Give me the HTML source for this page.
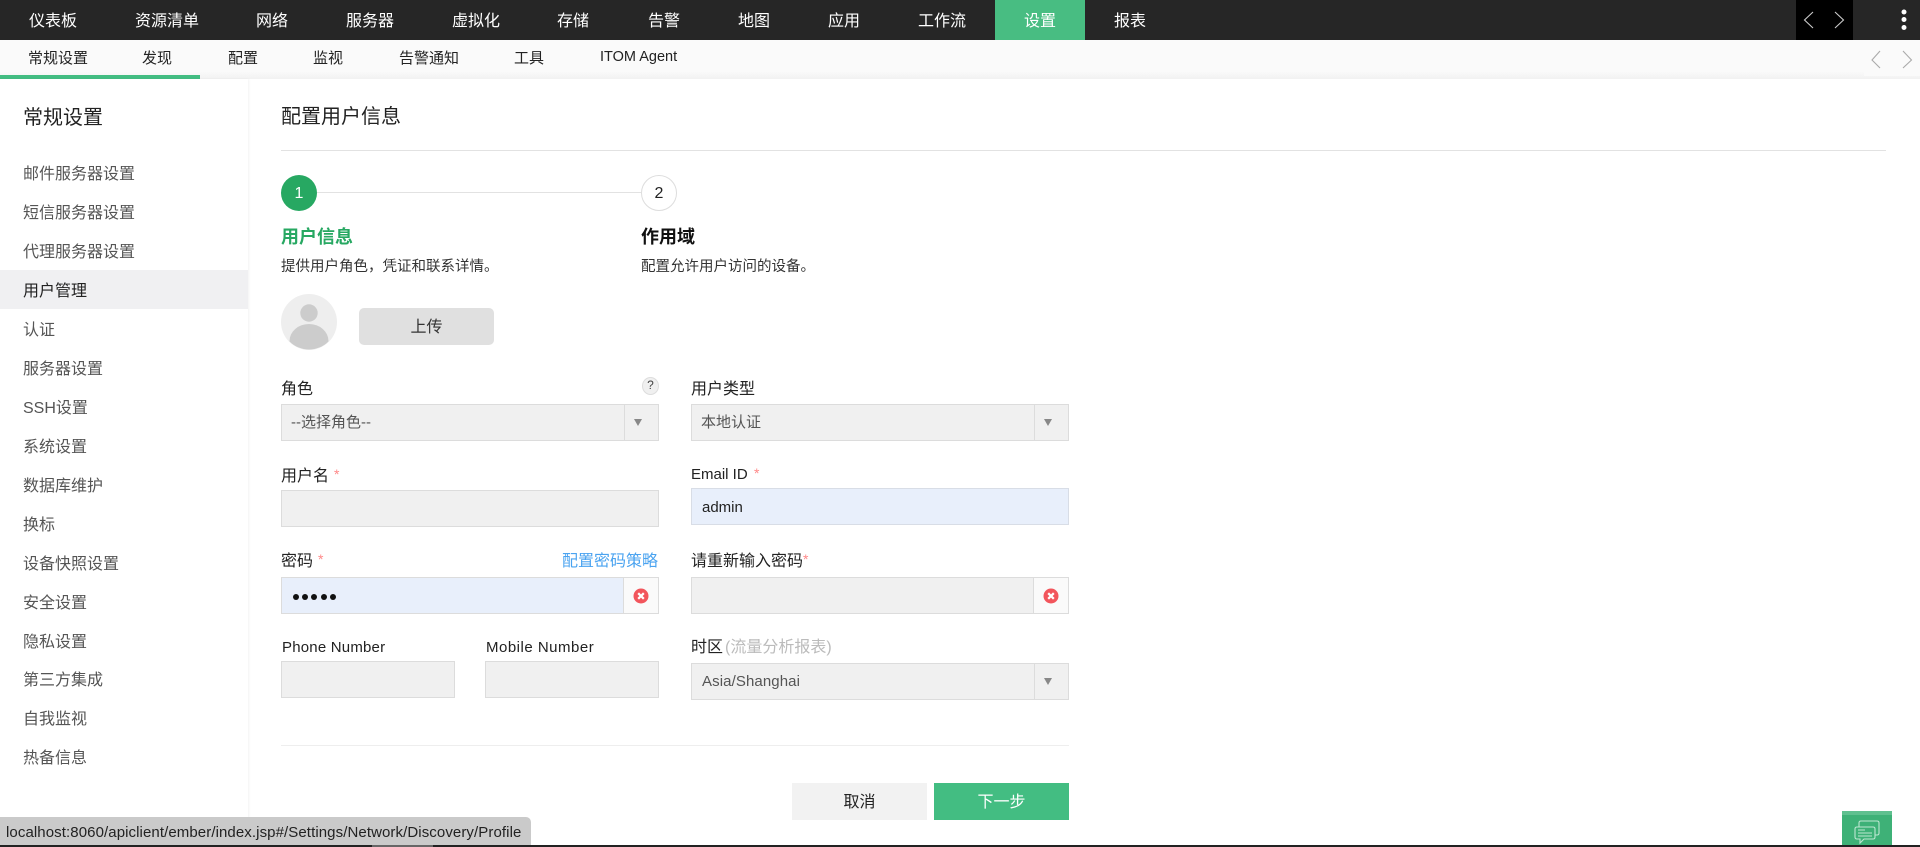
<!DOCTYPE html>
<html lang="zh-CN">
<head>
<meta charset="utf-8">
<title>配置用户信息</title>
<style>
html,body{margin:0;padding:0;width:1920px;height:847px;overflow:hidden;background:#fff}
body{position:relative;font-family:"Liberation Sans","Noto Sans CJK SC",sans-serif;color:#333}
.a{position:absolute;box-sizing:border-box}
.t{position:absolute;white-space:nowrap;line-height:20px;height:20px;font-size:16px}
.n{color:#fff;top:12px}
.s{color:#222;top:49px;font-size:15px}
.m{color:#555;left:23px;font-size:16px}
.l{color:#222}
.r{color:#f88;font-size:14px}
.f{position:absolute;box-sizing:border-box;background:#f0f0f0;border:1px solid #dcdcdc}
.sep{position:absolute;top:0;bottom:0;width:1px;background:#dcdcdc}
.arr{position:absolute;width:0;height:0;border-left:4px solid transparent;border-right:4px solid transparent;border-top:7px solid #888}
.dot{position:absolute;width:6px;height:6px;border-radius:50%;background:#111;top:594px}
</style>
</head>
<body>
<!-- top bar -->
<div class="a" style="left:0;top:0;width:1920px;height:40px;background:#262626"></div>
<div class="a" style="left:995px;top:0;width:90px;height:40px;background:#48bd82"></div>
<div class="t n" style="left:29px">仪表板</div>
<div class="t n" style="left:135px">资源清单</div>
<div class="t n" style="left:256px">网络</div>
<div class="t n" style="left:346px">服务器</div>
<div class="t n" style="left:452px">虚拟化</div>
<div class="t n" style="left:557px">存储</div>
<div class="t n" style="left:648px">告警</div>
<div class="t n" style="left:738px">地图</div>
<div class="t n" style="left:828px">应用</div>
<div class="t n" style="left:918px">工作流</div>
<div class="t n" style="left:1024px">设置</div>
<div class="t n" style="left:1114px">报表</div>
<div class="a" style="left:1796px;top:0;width:57px;height:40px;background:#000"></div>
<svg class="a" style="left:1796px;top:0" width="124" height="40" viewBox="0 0 124 40">
<path d="M17 12L8.500 20L17 28M39 12L47.500 20L39 28" fill="none" stroke="#ccc" stroke-width="1.100"/>
<circle cx="108" cy="12" r="2.500" fill="#fff"/><circle cx="108" cy="19.500" r="2.500" fill="#fff"/><circle cx="108" cy="27.500" r="2.500" fill="#fff"/>
</svg>
<!-- sub bar -->
<div class="a" style="left:0;top:40px;width:1920px;height:39px;background:linear-gradient(#fafafa 0,#fafafa 80%,#f2f2f2 100%)"></div>
<div class="a" style="left:1864px;top:40px;width:56px;height:36px;background:#fafafa"></div>
<div class="a" style="left:0;top:75px;width:200px;height:4px;background:#43bd82"></div>
<div class="t s" style="left:28px">常规设置</div>
<div class="t s" style="left:142px">发现</div>
<div class="t s" style="left:228px">配置</div>
<div class="t s" style="left:313px">监视</div>
<div class="t s" style="left:399px">告警通知</div>
<div class="t s" style="left:514px">工具</div>
<div class="t s" style="left:600px;top:47px;font-size:14.500px;letter-spacing:0">ITOM Agent</div>
<svg class="a" style="left:1864px;top:40px" width="56" height="36" viewBox="0 0 56 36">
<path d="M16 11L8 20L16 28M39 11L47.500 20L39 28" fill="none" stroke="#aaa" stroke-width="1.100"/>
</svg>
<!-- sidebar -->
<div class="a" style="left:0;top:79px;width:248px;height:768px;background:#fff;box-shadow:1px 0 2px rgba(0,0,0,.05)"></div>
<div class="a" style="left:0;top:270px;width:248px;height:39px;background:#f0f0f2"></div>
<div class="t" style="left:23px;top:108px;font-size:20px;color:#222">常规设置</div>
<div class="t m" style="top:165px">邮件服务器设置</div>
<div class="t m" style="top:204px">短信服务器设置</div>
<div class="t m" style="top:243px">代理服务器设置</div>
<div class="t m" style="top:282px;color:#222">用户管理</div>
<div class="t m" style="top:321px">认证</div>
<div class="t m" style="top:360px">服务器设置</div>
<div class="t m" style="top:399px">SSH设置</div>
<div class="t m" style="top:438px">系统设置</div>
<div class="t m" style="top:477px">数据库维护</div>
<div class="t m" style="top:516px">换标</div>
<div class="t m" style="top:555px">设备快照设置</div>
<div class="t m" style="top:594px">安全设置</div>
<div class="t m" style="top:633px">隐私设置</div>
<div class="t m" style="top:671px">第三方集成</div>
<div class="t m" style="top:710px">自我监视</div>
<div class="t m" style="top:749px">热备信息</div>
<!-- heading -->
<div class="t" style="left:281px;top:107px;font-size:20px;color:#222">配置用户信息</div>
<div class="a" style="left:281px;top:150px;width:1605px;height:1px;background:#e2e2e2"></div>
<!-- stepper -->
<div class="a" style="left:317px;top:192px;width:324px;height:1px;background:#e2e2e2"></div>
<div class="a" style="left:281px;top:175px;width:36px;height:36px;border-radius:50%;background:#27a862;color:#fff;font-size:16px;line-height:38px;text-align:center">1</div>
<div class="a" style="left:641px;top:175px;width:36px;height:36px;border-radius:50%;background:#fff;border:1px solid #ddd;color:#222;font-size:16px;line-height:36px;text-align:center">2</div>
<div class="t" style="left:281px;top:227px;font-size:18px;font-weight:700;color:#27a862">用户信息</div>
<div class="t" style="left:641px;top:227px;font-size:18px;font-weight:700;color:#111">作用域</div>
<div class="t" style="left:281px;top:257px;font-size:14.500px;color:#333">提供用户角色，凭证和联系详情。</div>
<div class="t" style="left:641px;top:257px;font-size:14.500px;color:#333">配置允许用户访问的设备。</div>
<!-- avatar -->
<svg class="a" style="left:281px;top:294px" width="57" height="57" viewBox="0 0 57 57">
<defs><clipPath id="c"><circle cx="28" cy="28" r="27.500"/></clipPath></defs>
<circle cx="28" cy="28" r="28" fill="#eee"/>
<circle cx="28" cy="19" r="8.700" fill="#ccc"/>
<ellipse cx="28" cy="47" rx="19.500" ry="17" fill="#ccc" clip-path="url(#c)"/>
</svg>
<div class="a" style="left:359px;top:308px;width:135px;height:37px;background:#e0e0e0;border-radius:5px;font-size:16px;line-height:39px;text-align:center;color:#333">上传</div>
<!-- role row -->
<div class="t l" style="left:281px;top:380px">角色</div>
<div class="a" style="left:642px;top:377px;width:17px;height:18px;border-radius:50%;background:#f0f0f0;border:1px solid #ddd;font-size:12px;line-height:15px;text-align:center;color:#444">?</div>
<div class="t l" style="left:691px;top:380px">用户类型</div>
<div class="f" style="left:281px;top:404px;width:378px;height:37px"><div class="sep" style="left:342px"></div><div class="arr" style="left:352px;top:14px"></div></div>
<div class="t" style="left:291px;top:413px;font-size:15px;color:#555">--选择角色--</div>
<div class="f" style="left:691px;top:404px;width:378px;height:37px"><div class="sep" style="left:342px"></div><div class="arr" style="left:352px;top:14px"></div></div>
<div class="t" style="left:701px;top:413px;font-size:15px;color:#555">本地认证</div>
<!-- username / email -->
<div class="t l" style="left:281px;top:467px">用户名</div>
<div class="t r" style="left:334px;top:464px">*</div>
<div class="t l" style="left:691px;top:465px;font-size:15px">Email ID</div>
<div class="t r" style="left:754px;top:463px">*</div>
<div class="f" style="left:281px;top:490px;width:378px;height:37px"></div>
<div class="f" style="left:691px;top:488px;width:378px;height:37px;background:#e8effb;border-color:#d8dde6"></div>
<div class="t" style="left:702px;top:498px;font-size:15px;color:#222">admin</div>
<!-- password -->
<div class="t l" style="left:281px;top:552px">密码</div>
<div class="t r" style="left:318px;top:549px">*</div>
<div class="t" style="left:562px;top:552px;color:#4aa3f0">配置密码策略</div>
<div class="t l" style="left:691px;top:552px">请重新输入密码</div>
<div class="t r" style="left:803px;top:549px">*</div>
<div class="f" style="left:281px;top:577px;width:378px;height:37px;background:#e8effb"></div>
<div class="a" style="left:623px;top:577px;width:36px;height:37px;background:#fafafa;border:1px solid #dcdcdc"></div>
<div class="f" style="left:691px;top:577px;width:378px;height:37px"></div>
<div class="a" style="left:1033px;top:577px;width:36px;height:37px;background:#fafafa;border:1px solid #dcdcdc"></div>
<div class="dot" style="left:293px"></div><div class="dot" style="left:302px"></div><div class="dot" style="left:311px"></div><div class="dot" style="left:321px"></div><div class="dot" style="left:330px"></div>
<svg class="a" style="left:633px;top:588px" width="16" height="16" viewBox="0 0 16 16"><circle cx="8" cy="8" r="7.500" fill="#f2555c"/><path d="M5.200 5.200L10.800 10.800M10.800 5.200L5.200 10.800" stroke="#fff" stroke-width="2.200"/></svg>
<svg class="a" style="left:1043px;top:588px" width="16" height="16" viewBox="0 0 16 16"><circle cx="8" cy="8" r="7.500" fill="#f2555c"/><path d="M5.200 5.200L10.800 10.800M10.800 5.200L5.200 10.800" stroke="#fff" stroke-width="2.200"/></svg>
<!-- phone row -->
<div class="t l" style="left:282px;top:638px;font-size:15px;letter-spacing:.2px">Phone Number</div>
<div class="t l" style="left:486px;top:638px;font-size:15px;letter-spacing:.5px">Mobile Number</div>
<div class="t l" style="left:691px;top:638px">时区</div>
<div class="t" style="left:725px;top:638px;color:#bbb">(流量分析报表)</div>
<div class="f" style="left:281px;top:661px;width:174px;height:37px"></div>
<div class="f" style="left:485px;top:661px;width:174px;height:37px"></div>
<div class="f" style="left:691px;top:663px;width:378px;height:37px"><div class="sep" style="left:342px"></div><div class="arr" style="left:352px;top:14px"></div></div>
<div class="t" style="left:702px;top:672px;font-size:15px;color:#555;letter-spacing:.1px">Asia/Shanghai</div>
<!-- footer -->
<div class="a" style="left:281px;top:745px;width:788px;height:1px;background:#eee"></div>
<div class="a" style="left:792px;top:783px;width:135px;height:37px;background:#f2f2f2;font-size:16px;line-height:39px;text-align:center;color:#222">取消</div>
<div class="a" style="left:934px;top:783px;width:135px;height:37px;background:#43bd82;font-size:16px;line-height:39px;text-align:center;color:#fff">下一步</div>
<!-- bottom -->
<div class="a" style="left:0;top:845px;width:1920px;height:2px;background:#222"></div>
<div class="a" style="left:372px;top:845px;width:61px;height:2px;background:#666"></div>
<div class="a" style="left:0;top:817px;width:531px;height:28px;background:#cacaca;border-top-right-radius:5px"></div>
<div class="t" style="left:6px;top:823px;font-size:15px;color:#222;letter-spacing:.09px">localhost:8060/apiclient/ember/index.jsp#/Settings/Network/Discovery/Profile</div>
<!-- chat -->
<div class="a" style="left:1842px;top:811px;width:50px;height:34px;background:#3eb177;border-top:4px solid #5fc08f"></div>
<svg class="a" style="left:1842px;top:815px" width="50" height="30" viewBox="0 0 50 30">
<path d="M17 12V8Q17 6 19 6H35Q37 6 37 8V18Q37 20 35 20H33" fill="none" stroke="#bfe6d2" stroke-width="1.100"/>
<path d="M15 12H31Q33 12 33 14V22Q33 24 31 24H22L18 28V24H15Q13 24 13 22V14Q13 12 15 12Z" fill="#3eb177" stroke="#bfe6d2" stroke-width="1.100"/>
<path d="M16 15H23M16 18H30M16 21H30" stroke="#bfe6d2" stroke-width="1.100"/>
</svg>
</body>
</html>
